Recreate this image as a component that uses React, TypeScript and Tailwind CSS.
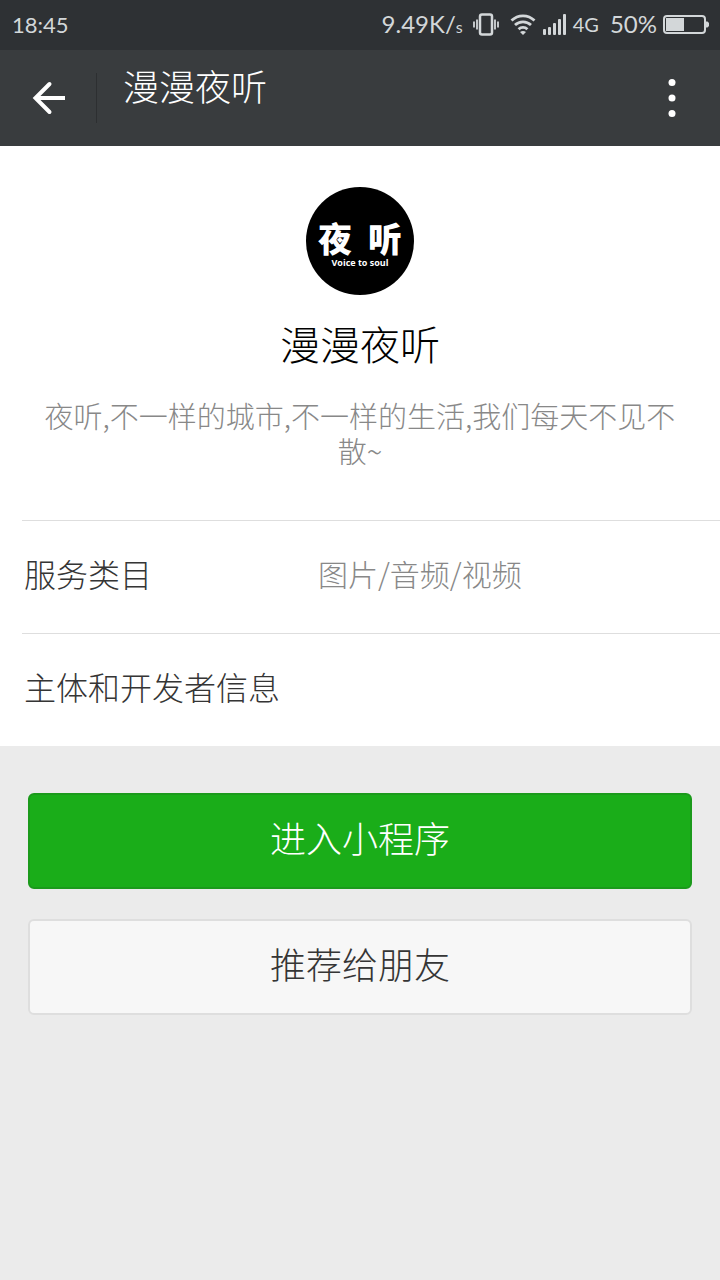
import React from 'react';

const details = [
  { label: '服务类目', value: '图片/音频/视频' },
  { label: '主体和开发者信息', value: '' },
];

const VibrateIcon: React.FC = () => (
  <svg width="26" height="24" viewBox="0 0 26 24" fill="none" stroke="currentColor" strokeWidth="2.5" aria-hidden="true">
    <rect x="7" y="2.5" width="12" height="20" rx="2" />
    <path d="M1 9.5v6M4 7.5v10M22 7.5v10M25 9.5v6" strokeWidth="1.8" />
  </svg>
);

const WifiIcon: React.FC = () => (
  <svg width="26" height="22" viewBox="0 0 26 22" fill="none" stroke="currentColor" strokeWidth="2.8" aria-hidden="true">
    <path d="M1.5 7.5C8 1.2 18 1.2 24.5 7.5" />
    <path d="M5 12C9.5 7.7 16.5 7.7 21 12" />
    <path d="M8.6 16.2C11 13.7 15 13.7 17.4 16.2" />
    <path d="M10 19Q13 16.8 16 19L13 22Z" fill="currentColor" stroke="none" />
  </svg>
);

const SignalIcon: React.FC = () => (
  <svg width="24" height="22" viewBox="0 0 24 22" fill="currentColor" aria-hidden="true">
    <rect x="0" y="16" width="3" height="6" rx="1" />
    <rect x="5" y="14" width="3" height="8" rx="1" />
    <rect x="10" y="10" width="3" height="12" rx="1" />
    <rect x="15" y="6" width="3" height="16" rx="1" />
    <rect x="20" y="1" width="3" height="21" rx="1" />
  </svg>
);

const BatteryIcon: React.FC = () => (
  <svg width="47" height="20" viewBox="0 0 47 20" aria-hidden="true">
    <rect x="1" y="2" width="41" height="17" rx="3" fill="none" stroke="currentColor" strokeWidth="2" />
    <rect x="3" y="4" width="18" height="13" fill="currentColor" />
    <path d="M43 7.5h1.5l1.5 1.5v3l-1.5 1.5H43z" fill="currentColor" />
  </svg>
);

const StatusBar: React.FC = () => (
  <div className="flex h-[50px] items-center justify-between bg-[#2e3134] pr-[10px] pb-[2px] pl-3 text-[#d3d7d9]">
    <span className="text-[22px]">18:45</span>
    <div className="flex items-center">
      <span className="mr-[10px] text-[24px]">9.49K/<span className="text-[16px]">s</span></span>
      <VibrateIcon />
      <span className="w-[11px]" />
      <WifiIcon />
      <span className="w-[7px]" />
      <SignalIcon />
      <span className="ml-[6px] text-[20px]">4G</span>
      <span className="mr-[6px] ml-[11px] text-[24px]">50%</span>
      <BatteryIcon />
    </div>
  </div>
);

const TitleBar: React.FC = () => (
  <header className="flex h-24 items-center bg-[#393c3e] text-white">
    <button type="button" aria-label="返回" className="flex w-24 items-center justify-center">
      <svg width="34" height="34" viewBox="0 0 34 34" fill="none" stroke="currentColor" strokeWidth="4">
        <path d="M18.5 3L4.5 17L18.5 31" strokeLinecap="round" />
        <path d="M4.5 17H34" />
      </svg>
    </button>
    <div className="h-[50px] w-px bg-[#2d2f31]" />
    <h1 className="ml-[26px] flex-1 pb-[22px] text-[36px] leading-[48px] font-light">漫漫夜听</h1>
    <button type="button" aria-label="更多" className="flex w-24 items-center justify-center">
      <svg width="8" height="40" viewBox="0 0 8 40" fill="currentColor">
        <circle cx="4" cy="4.5" r="3.5" />
        <circle cx="4" cy="20" r="3.5" />
        <circle cx="4" cy="35.5" r="3.5" />
      </svg>
    </button>
  </header>
);

const App: React.FC = () => {
  return (
    <div className="min-h-screen bg-[#ebebeb] font-['Lato','Noto_Sans_CJK_SC',sans-serif]">
      <StatusBar />
      <TitleBar />

      <main className="font-['Noto_Sans_CJK_SC',sans-serif] font-light">
        <div className="bg-white">
          <section className="flex flex-col items-center px-10 pt-[41px] pb-[52px] text-center">
            <div className="flex size-[108px] flex-col items-center justify-center rounded-full bg-black pt-[6px] text-white">
              <div className="flex gap-4 text-[34px] leading-[38px] font-black">
                <span>夜</span>
                <span>听</span>
              </div>
              <div className="font-['Open_Sans',sans-serif] text-[9px] leading-[12px] font-bold">Voice to soul</div>
            </div>
            <h2 className="mt-6 text-[40px] leading-[48px] text-black">漫漫夜听</h2>
            <p className="mt-[31px] text-[29px] leading-[35px] text-[#888888]">
              夜听,不一样的城市,不一样的生活,我们每天不见不散~
            </p>
          </section>

          <dl className="pl-[22px]">
            {details.map((item) => (
              <div key={item.label} className="flex border-t border-[#dedede] pt-7 pb-9 pl-[2px] leading-[48px]">
                <dt className="min-w-[294px] text-[32px] text-[#353535]">{item.label}</dt>
                <dd className="text-[30px] text-[#888888]">{item.value}</dd>
              </div>
            ))}
          </dl>
        </div>

        <div className="flex flex-col gap-[30px] px-7 pt-[47px] text-[36px] leading-[48px]">
          <button type="button" className="rounded-md border-2 border-[#1b9a1b] bg-[#1aad19] pt-[18px] pb-[26px] text-white">
            进入小程序
          </button>
          <button type="button" className="rounded-md border-2 border-[#dedede] bg-[#f7f7f7] pt-[18px] pb-[26px] text-[#353535]">
            推荐给朋友
          </button>
        </div>
      </main>
    </div>
  );
};

export default App;
